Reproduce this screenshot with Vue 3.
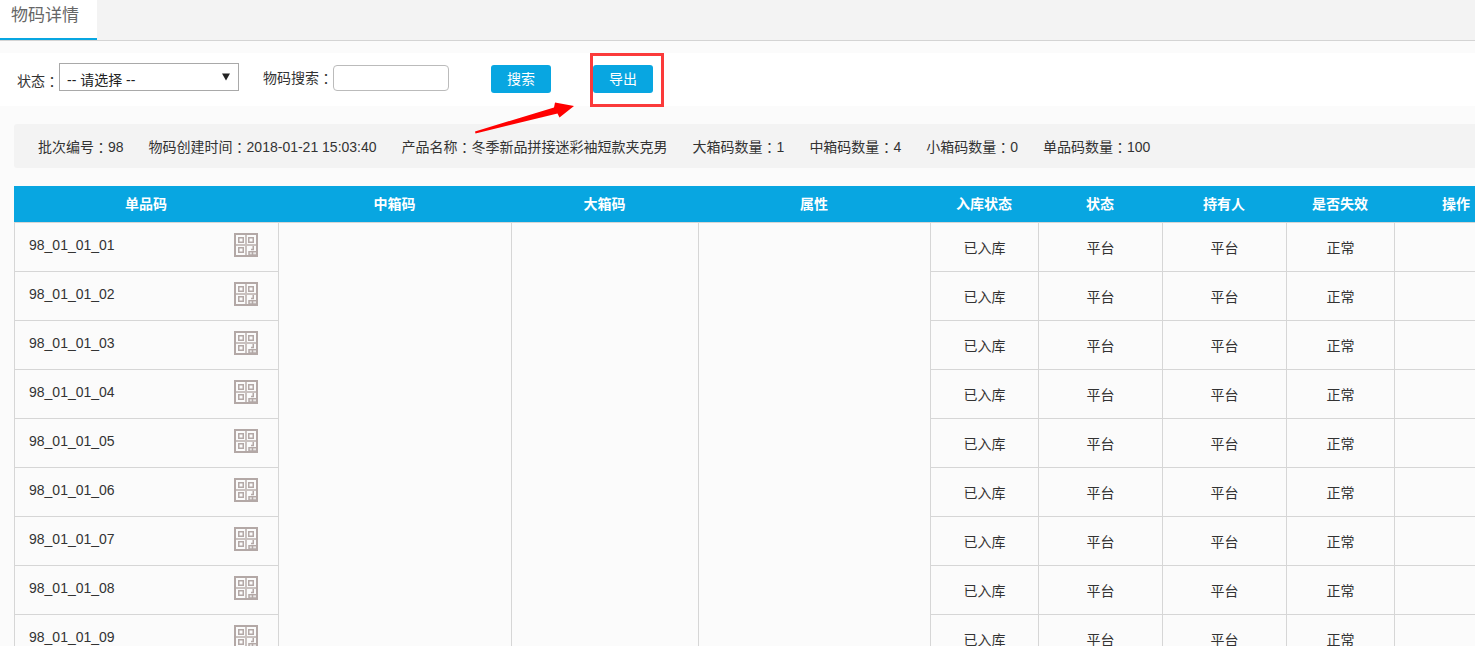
<script setup>
import { ref } from 'vue'

const status = ref('')
const keyword = ref('')

const info = [
  { label: '批次编号', value: '98' },
  { label: '物码创建时间', value: '2018-01-21 15:03:40' },
  { label: '产品名称', value: '冬季新品拼接迷彩袖短款夹克男' },
  { label: '大箱码数量', value: '1' },
  { label: '中箱码数量', value: '4' },
  { label: '小箱码数量', value: '0' },
  { label: '单品码数量', value: '100' },
]

const columns = [
  { title: '单品码', cls: 'w-code' },
  { title: '中箱码', cls: 'w-middle' },
  { title: '大箱码', cls: 'w-large' },
  { title: '属性', cls: 'w-attr' },
  { title: '入库状态', cls: 'w-small' },
  { title: '状态', cls: 'w-normal' },
  { title: '持有人', cls: 'w-normal' },
  { title: '是否失效', cls: 'w-small' },
  { title: '操作', cls: 'w-normal' },
]

const rows = Array.from({ length: 10 }, (_, i) => ({
  code: '98_01_01_' + String(i + 1).padStart(2, '0'),
  stock: '已入库',
  status: '平台',
  holder: '平台',
  valid: '正常',
}))
</script>

<template>
  <div class="page">
    <nav class="tabs">
      <a class="tab" href="#">物码详情</a>
    </nav>

    <form class="toolbar" @submit.prevent>
      <div class="field field-status">
        <label for="status">状态<span class="colon">：</span></label>
        <div class="select-box">
          <select id="status" v-model="status">
            <option value="">-- 请选择 --</option>
            <option value="in">已入库</option>
          </select>
          <svg class="caret" width="8" height="8" viewBox="0 0 8 8" aria-hidden="true">
            <path d="M0 0.5H8L4 7.5Z" fill="#222" />
          </svg>
        </div>
      </div>
      <div class="field field-search">
        <label for="keyword">物码搜索<span class="colon">：</span></label>
        <input id="keyword" v-model="keyword" type="text" />
      </div>
      <button class="btn" type="submit">搜索</button>
      <div class="marked">
        <button class="btn" type="button">导出</button>
        <svg class="arrow" width="100" height="32" viewBox="0 0 100 32" aria-hidden="true">
          <path d="M0 29.5L79 5.5L80 0.5L99 4L84.500 15.500L82.500 11.500L0.500 31.500Z" fill="#ff0000" />
        </svg>
      </div>
    </form>

    <section class="info">
      <span v-for="item in info" :key="item.label">{{ item.label }}<span class="colon">：</span>{{ item.value }}</span>
    </section>

    <table class="grid">
      <colgroup>
        <col v-for="(c, i) in columns" :key="i" :class="c.cls" />
      </colgroup>
      <thead>
        <tr>
          <th v-for="c in columns" :key="c.title" scope="col">{{ c.title }}</th>
        </tr>
      </thead>
      <tbody>
        <tr v-for="(row, i) in rows" :key="row.code">
          <td class="code-cell">
            <div class="code">
              <span>{{ row.code }}</span>
              <svg width="24" height="24" viewBox="0 0 24 24" fill="none" stroke="#b3a8a6" aria-hidden="true">
                <rect x="1" y="1" width="22" height="22" stroke-width="2" />
                <path d="M12 2V22M2 12H22" stroke-width="2" stroke="#c9c1bf" />
                <path d="M4.750 4.750h4.500v4.500h-4.500zM14.750 4.750h4.500v4.500h-4.500zM4.750 14.750h4.500v4.500h-4.500z" stroke-width="1.500" />
                <path d="M19.250 13V16.500H17M15 22V18.750H22M18.500 19V22" stroke-width="1.500" />
                <path d="M15 21.250H22" stroke-width="1" />
              </svg>
            </div>
          </td>
          <template v-if="i === 0">
            <td :rowspan="rows.length"></td>
            <td :rowspan="rows.length"></td>
            <td :rowspan="rows.length"></td>
          </template>
          <td>{{ row.stock }}</td>
          <td>{{ row.status }}</td>
          <td>{{ row.holder }}</td>
          <td>{{ row.valid }}</td>
          <td></td>
        </tr>
      </tbody>
    </table>
  </div>
</template>

<style>
body {
  background: #fbfbfb;
}
</style>

<style scoped>
.page {
  height: 100vh;
  overflow: hidden;
  color: #333;
  font: 14px/20px "Liberation Sans", "Noto Sans CJK SC", sans-serif;
}
.colon {
  font-family: "Noto Sans CJK TC", sans-serif;
  line-height: 1;
  vertical-align: -1px;
}
.tabs {
  display: flex;
  height: 40px;
  background: #f3f3f3;
  border-bottom: 1px solid #d4d4d4;
}
.tab {
  box-sizing: border-box;
  padding: 0 18px 0 11px;
  border-bottom: 2px solid #08a6e1;
  background: #fff;
  color: #666;
  font-size: 17px;
  line-height: 32px;
  text-decoration: none;
}
.toolbar {
  display: flex;
  align-items: flex-start;
  margin-top: 12px;
  padding: 12px 17px 13px;
  background: #fff;
}
.field {
  display: flex;
}
.field-status {
  align-items: flex-end;
  margin: -2px 24px 0 0;
}
.field-search {
  align-items: center;
  margin-right: 42px;
}
.select-box {
  position: relative;
}
select {
  display: block;
  box-sizing: border-box;
  width: 180px;
  height: 28px;
  padding: 6px 24px 0 7px;
  border: 1px solid #a9a9a9;
  border-radius: 0;
  appearance: none;
  background: #fff;
  color: #222;
  font: inherit;
}
.caret {
  position: absolute;
  top: 10px;
  right: 9px;
  pointer-events: none;
}
input {
  box-sizing: border-box;
  width: 116px;
  height: 26px;
  padding: 0 6px;
  border: 1px solid #bbb;
  border-radius: 4px;
  background: #fff;
  font: inherit;
}
.btn {
  display: block;
  width: 60px;
  height: 28px;
  padding: 0;
  border: 0;
  border-radius: 3px;
  background: #08a6e1;
  color: #fff;
  font: inherit;
}
.marked {
  position: relative;
  margin-left: 42px;
}
.marked::after {
  content: "";
  position: absolute;
  inset: -12px -11px -14px -3px;
  border: 3px solid #fb3a3a;
  pointer-events: none;
}
.arrow {
  position: absolute;
  top: 37px;
  left: -118px;
}
.info {
  display: flex;
  gap: 25px;
  margin: 18px 0 18px 14px;
  padding: 13px 24px 11px;
  border-radius: 3px 0 0 3px;
  background: #f3f3f3;
  white-space: nowrap;
}
.grid {
  width: calc(100% - 14px);
  min-width: 1504px;
  margin-left: 14px;
  border-spacing: 0;
  table-layout: fixed;
}
.w-code { width: 264px; }
.w-middle { width: 233px; }
.w-large { width: 187px; }
.w-attr { width: 232px; }
.w-small { width: 108px; }
.w-normal { width: 124px; }
th {
  height: 36px;
  padding: 0;
  background: #08a6e1;
  color: #fff;
  font-weight: bold;
}
td {
  box-sizing: border-box;
  height: 49px;
  padding: 2px 0 0;
  border-top: 1px solid #d6d6d6;
  border-left: 1px solid #d6d6d6;
  text-align: center;
}
.code-cell {
  padding: 10px 20px 0 14px;
  vertical-align: top;
}
.code {
  display: flex;
  align-items: center;
  justify-content: space-between;
}
</style>
